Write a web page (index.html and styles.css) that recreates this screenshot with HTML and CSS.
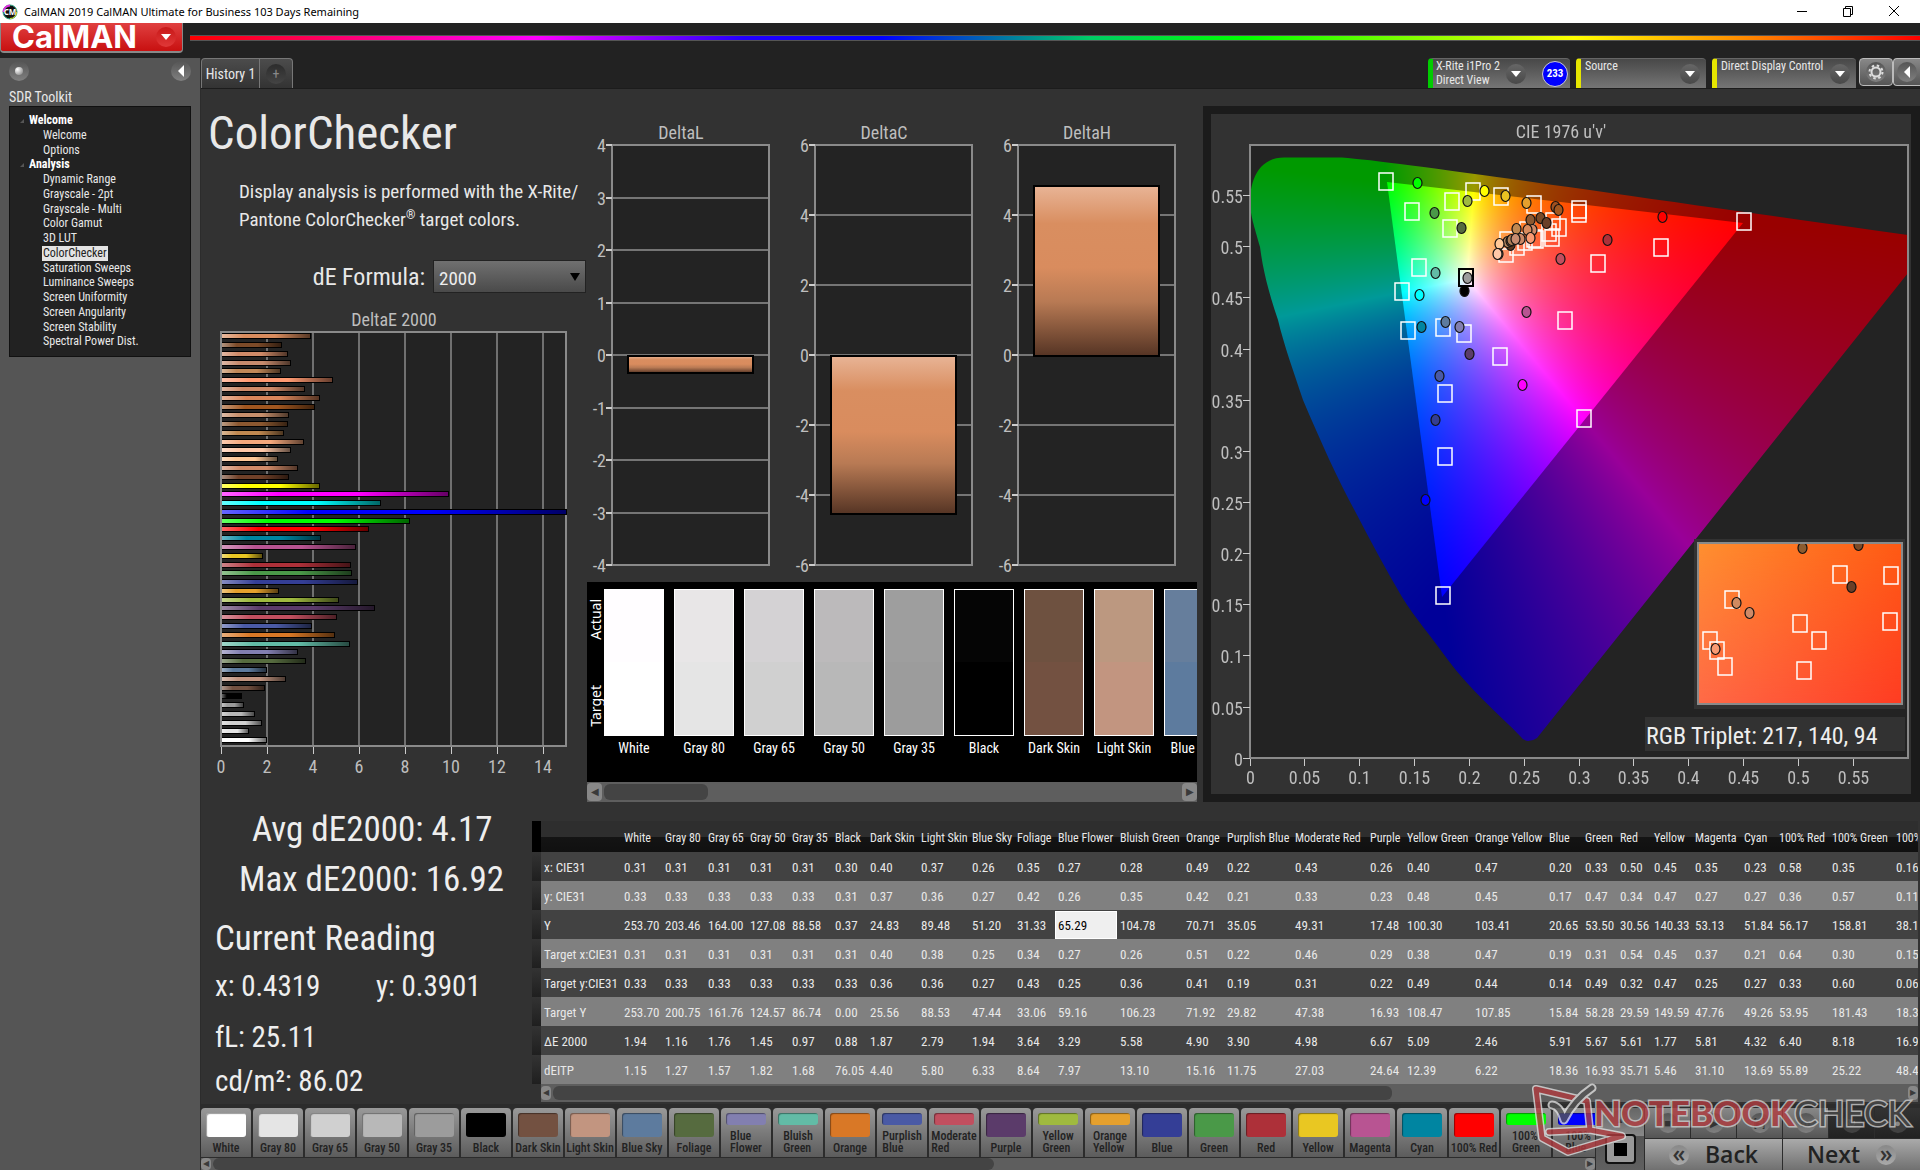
FILE: index.html
```
<!DOCTYPE html>
<html lang="en">
<head>
<meta charset="utf-8">
<title>CalMAN 2019 CalMAN Ultimate for Business</title>
<link rel="stylesheet" href="styles.css">
</head>
<body>
<div class="titlebar">
  <svg class="app-icon" viewBox="0 0 16 16" width="16" height="16" aria-hidden="true">
    <circle cx="8" cy="8" r="7" fill="#111" stroke="#3a8" stroke-width="1"/>
    <path d="M1.5 8A6.5 6.5 0 0 1 8 1.500" fill="none" stroke="#d3d" stroke-width="2"/>
    <path d="M8 14.500A6.500 6.500 0 0 0 14.500 8" fill="none" stroke="#dd2" stroke-width="1"/>
    <text x="8" y="11" text-anchor="middle" font-size="8" font-weight="700" fill="#fff">CM</text>
  </svg>
  <span class="app-title">CalMAN 2019 CalMAN Ultimate for Business 103 Days Remaining</span>
  <div class="window-buttons">
    <button type="button" aria-label="Minimize"><svg width="12" height="12" viewBox="0 0 12 12"><path d="M1 6.500H11" stroke="#000"/></svg></button>
    <button type="button" aria-label="Restore"><svg width="12" height="12" viewBox="0 0 12 12"><path d="M1.500 3.500H8.500V11.500H1.500ZM3.500 3V1.500H10.500V9.500H9" fill="none" stroke="#000"/></svg></button>
    <button type="button" aria-label="Close"><svg width="12" height="12" viewBox="0 0 12 12"><path d="M1 1L11 11M11 1L1 11" stroke="#000"/></svg></button>
  </div>
</div>

<header class="brandbar">
  <button type="button" class="brand">CalMAN <span class="round red"><svg width="10" height="6" viewBox="0 0 10 6"><path d="M0 0H10L5 6Z" fill="#fff"/></svg></span></button>
  <div class="rainbow"></div>
</header>

<div class="workspace">
  <aside class="sidebar">
    <div class="sidebar-tools">
      <span class="round"><i class="dot"></i></span>
      <button type="button" class="round" aria-label="Collapse"><svg width="6" height="12" viewBox="0 0 6 12"><path d="M6 0V12L0 6Z" fill="#fff"/></svg></button>
    </div>
    <h2>SDR Toolkit</h2>
    <nav class="tree">
      <h3>Welcome</h3>
      <a href="#">Welcome</a>
      <a href="#">Options</a>
      <h3>Analysis</h3>
      <a href="#">Dynamic Range</a>
      <a href="#">Grayscale - 2pt</a>
      <a href="#">Grayscale - Multi</a>
      <a href="#">Color Gamut</a>
      <a href="#">3D LUT</a>
      <a href="#" class="current">ColorChecker</a>
      <a href="#">Saturation Sweeps</a>
      <a href="#">Luminance Sweeps</a>
      <a href="#">Screen Uniformity</a>
      <a href="#">Screen Angularity</a>
      <a href="#">Screen Stability</a>
      <a href="#">Spectral Power Dist.</a>
    </nav>
  </aside>

  <div class="stage">
    <div class="toolbar">
      <div class="tabs">
        <button type="button">History 1</button>
        <button type="button" class="add" aria-label="Add tab"><span class="round dark">+</span></button>
      </div>
      <div class="devices">
        <div class="device green meter">
          <span>X-Rite i1Pro 2<br>Direct View</span>
          <button type="button" class="round" aria-label="Meter menu"><svg width="10" height="6" viewBox="0 0 10 6"><path d="M0 0H10L5 6Z" fill="#fff"/></svg></button>
          <b class="count">233</b>
        </div>
        <div class="device source">
          <span>Source</span>
          <button type="button" class="round" aria-label="Source menu"><svg width="10" height="6" viewBox="0 0 10 6"><path d="M0 0H10L5 6Z" fill="#fff"/></svg></button>
        </div>
        <div class="device display">
          <span>Direct Display Control</span>
          <button type="button" class="round" aria-label="Display menu"><svg width="10" height="6" viewBox="0 0 10 6"><path d="M0 0H10L5 6Z" fill="#fff"/></svg></button>
        </div>
        <button type="button" class="square" aria-label="Settings"><span class="round"><svg width="16" height="16" viewBox="0 0 16 16"><circle cx="8" cy="8" r="4.500" fill="none" stroke="#ddd" stroke-width="2"/><circle cx="8" cy="8" r="6.500" fill="none" stroke="#ddd" stroke-width="2" stroke-dasharray="2.500 2.600"/></svg></span></button>
        <button type="button" class="square narrow" aria-label="Collapse panel"><span class="round"><svg width="6" height="12" viewBox="0 0 6 12"><path d="M6 0V12L0 6Z" fill="#fff"/></svg></span></button>
      </div>
    </div>

    <main class="content">
      <section class="summary">
        <h1>ColorChecker</h1>
        <p>Display analysis is performed with the X-Rite/<br>Pantone ColorChecker<sup>®</sup> target colors.</p>
        <div class="formula">
          <label for="formula">dE Formula:</label>
          <div class="select"><select id="formula"><option>2000</option></select></div>
        </div>
        <svg id="delta-e" class="chart" viewBox="201 305 386 480" role="img" aria-label="DeltaE 2000"></svg>
      </section>

      <section class="deltas">
        <svg id="delta-lch" class="chart" viewBox="587 89 616 493" role="img" aria-label="DeltaL, DeltaC, DeltaH"></svg>
        <div class="swatch-panel">
          <div class="swatches">
            <div class="sides"><span>Actual</span><span>Target</span></div>
            <div class="swatch-row" id="swatches"></div>
          </div>
          <div class="scrollbar"><button type="button" aria-label="Scroll left">◀</button><div class="track"><i style="width:18%"></i></div><button type="button" aria-label="Scroll right">▶</button></div>
        </div>
      </section>

      <section class="cie">
        <div class="cie-inner">
          <canvas id="gamut" width="700" height="680"></canvas>
          <svg id="cie" class="chart" viewBox="1211 114 700 680" role="img" aria-label="CIE 1976 u'v'"></svg>
        </div>
      </section>
    </main>

    <section class="results">
      <div class="readings">
        <p class="big indent-a">Avg dE2000: 4.17</p>
        <p class="big indent-b">Max dE2000: 16.92</p>
        <p class="mid">Current Reading</p>
        <p class="small pair"><span>x: 0.4319</span><span>y: 0.3901</span></p>
        <p class="small spaced">fL: 25.11</p>
        <p class="small">cd/m²: 86.02</p>
      </div>
      <div class="grid-panel">
        <div class="grid-clip"><table id="data"></table></div>
        <div class="scrollbar wide"><button type="button" aria-label="Scroll left">◀</button><div class="track"><i style="width:62%"></i></div><button type="button" aria-label="Scroll right">▶</button></div>
      </div>
    </section>

    <footer class="footer">
      <div class="palette-panel">
        <div class="palette" id="palette"></div>
        <div class="scrollbar thin"><button type="button" aria-label="Scroll left">◀</button><div class="track"><i style="width:57%"></i></div><button type="button" aria-label="Scroll right">▶</button></div>
      </div>
      <div class="pattern">
        <span class="round">▲</span>
        <button type="button" aria-label="Stop pattern"><i></i></button>
      </div>
      <div class="controls">
        <div class="transport">
          <button type="button" aria-label="Stop"><span class="round">■</span></button>
          <button type="button" aria-label="Play"><span class="round">▶</span></button>
          <button type="button" aria-label="Read series"><span class="round">[▸]</span></button>
          <button type="button" aria-label="Continuous"><span class="round">∞</span></button>
          <button type="button" class="off" aria-label="Refresh" disabled><span class="round dark">↻</span></button>
          <button type="button" class="off" aria-label="Record" disabled><span class="round dark">●</span></button>
        </div>
        <div class="pager">
          <button type="button"><span class="round">«</span>Back</button>
          <button type="button">Next<span class="round">»</span></button>
        </div>
      </div>
      <svg class="watermark" width="400" height="100" viewBox="0 0 400 100" role="img" aria-label="Notebookcheck">
        <g fill="none" stroke-linejoin="round" stroke-linecap="round">
          <g id="cube" stroke="#ddd" stroke-width="8"><path d="M16 19L67 31L70 60L29 62M16 19L22 68L48 82L102 66L70 60"/></g>
          <path d="M16 19L67 31L70 60L29 62M16 19L22 68L48 82L102 66L70 60" stroke="#b03c40" stroke-width="5"/>
          <path d="M32 35Q40 36 44 50Q54 30 72 18" stroke="#ddd" stroke-width="9"/>
          <path d="M32 35Q40 36 44 50Q54 30 72 18" stroke="#555" stroke-width="5"/>
        </g>
        <text x="74" y="56" class="mark"><tspan fill="#b03c40" font-weight="900">NOTEBOOK</tspan><tspan fill="#484848" font-weight="400">CHECK</tspan></text>
      </svg>
    </footer>
  </div>
</div>
<script src="script.js"></script>
</body>
</html>
```
FILE: styles.css
```
* { box-sizing: border-box; }
body {
  margin: 0;
  min-height: 100vh;
  display: flex;
  flex-direction: column;
  background: #222;
  color: #e8e8e8;
  font-family: "Roboto Condensed", Roboto, sans-serif;
  font-size: 14px;
  overflow-x: hidden;
}
h1, h2, h3, p { margin: 0; font-weight: 400; }
button { font: inherit; color: inherit; border: 0; padding: 0; background: none; }
a { color: inherit; text-decoration: none; }

.titlebar { display: flex; align-items: center; height: 23px; padding: 0 2px; background: #fff; color: #000; font: 11px "Noto Sans", sans-serif; }
.titlebar svg { display: block; }
.app-title { margin-left: 6px; flex: 1; }
.window-buttons { display: flex; padding: 0 18px 2px 0; gap: 34px; }

.brandbar { display: flex; height: 35px; align-items: flex-start; gap: 7px; }
.brand { display: flex; align-items: center; justify-content: space-between; width: 183px; height: 30px; padding: 0 6px 0 11px; background: linear-gradient(#e04040, #c81010); border: solid #888; border-width: 0 1px 2px; border-radius: 0 0 4px 4px; color: #fff; font: 700 31px/28px Inter, sans-serif; }
.rainbow { flex: 1; height: 6px; margin-top: 12px; border: solid #555; border-width: 1px 0; background: linear-gradient(90deg, #f00, #f0f 20%, #20f 32%, #00f 40%, #0c6 52%, #0f0 61%, #ff0 80%, #f80 90%, #f00); }

.round { display: inline-flex; align-items: center; justify-content: center; flex: none; width: 20px; height: 20px; border-radius: 50%; background: linear-gradient(#555, #808080); color: #333; }
.round.red { background: linear-gradient(#c81818, #e03838); }
.round.dark { background: linear-gradient(#2c2c2c, #444); color: #888; }
.dot { width: 8px; height: 8px; border-radius: 50%; background: radial-gradient(at 30% 30%, #fff, #777); }

.workspace { flex: 1; display: grid; grid-template-columns: 201px minmax(0, 1fr); }
.sidebar { padding: 3px 9px 0; background: #555; border-right: 1px solid #2c2c2c; }
.sidebar-tools { display: flex; justify-content: space-between; }
.sidebar h2 { height: 34px; font-size: 14px; line-height: 32px; }
.tree { display: grid; grid-auto-rows: 1fr; justify-items: start; height: 251px; margin-top: -9px; padding: 6px 0 7px 32px; background: #222; border: 1px solid #111; font-size: 12px; line-height: 14px; }
.tree h3 { margin-left: -13px; font-size: 12px; font-weight: 700; color: #fff; position: relative; }
.tree h3::before { content: ""; position: absolute; left: -9px; top: 6px; border-top: 4px solid transparent; border-right: 4px solid #555; }
.tree a { padding: 0 1px; }
.tree .current { background: #e4e4e4; color: #222; }

.stage { display: flex; flex-direction: column; min-width: 0; background: #323232; }
.toolbar { display: flex; justify-content: space-between; height: 31px; background: #222; border-bottom: 1px solid #1c1c1c; }
.tabs { display: flex; border: 1px solid #777; border-bottom: 0; border-radius: 4px 4px 0 0; background: linear-gradient(#4c4c4c, #333); }
.tabs button { width: 57px; }
.tabs .add { width: 33px; border-left: 1px solid #777; }
.devices { display: flex; align-items: flex-start; line-height: 14px; font-size: 12px; }
.device { display: flex; align-items: center; gap: 4px; height: 30px; padding-right: 6px; background: linear-gradient(#484848, #757575); border-left: 5px solid #e6e600; border-top: 1px solid #666; border-radius: 4px 4px 0 0; }
.device > span { flex: 1; padding-left: 4px; align-self: flex-start; white-space: nowrap; }
.device .round { background: linear-gradient(#666, #484848); }
.device.green { border-left-color: #0c0; }
.meter { width: 142px; padding-right: 2px; margin-right: 6px; }
.meter > span { padding-left: 3px; }
.source { width: 130px; margin-right: 6px; }
.display { width: 144px; margin-right: 3px; }
.count { display: flex; align-items: center; justify-content: center; width: 26px; height: 26px; margin-left: 12px; border-radius: 50%; border: 1px solid #ccc; background: #00f; color: #fff; font-size: 11px; }
.square { width: 34px; height: 28px; border: 1px solid #bbb; border-radius: 4px; background: linear-gradient(#888, #555); }
.square.narrow { width: 27px; border-right: 0; border-radius: 4px 0 0 4px; }

.content { display: grid; grid-template-columns: 386fr 616fr 717fr; align-items: start; }
.content > section { min-width: 0; }
.chart { display: block; width: 100%; height: auto; font-size: 18px; fill: #bebebe; }
.summary h1 { padding: 14px 0 0 7px; font-size: 47px; line-height: 60px; }
.summary p { padding: 15px 0 0 38px; font-size: 19px; line-height: 28px; white-space: nowrap; }
.summary sup { font-size: 12px; line-height: 0; }
.formula { display: flex; justify-content: flex-end; align-items: center; gap: 8px; margin: 26px 1px 12px 0; font-size: 24px; }
.select { position: relative; width: 153px; height: 33px; }
.select select { appearance: none; width: 100%; height: 100%; padding: 4px 5px 0; border: 1px solid #222; border-radius: 0; background: linear-gradient(#707070, #4a4a4a); color: #eee; font: 19px "Roboto Condensed", sans-serif; }
.select::after { content: ""; position: absolute; right: 6px; top: 13px; border: solid transparent; border-width: 8px 5px 0; border-top-color: #000; }

.swatch-panel { margin-right: 6px; background: #000; }
.swatches { display: flex; height: 200px; padding-top: 7px; color: #fff; }
.sides { display: flex; flex-direction: column; justify-content: space-between; align-items: center; width: 17px; height: 148px; padding: 10px 0; flex: none; font: 14px "Noto Sans", sans-serif; }
.sides span { writing-mode: vertical-rl; transform: rotate(180deg); }
.swatch-row { display: flex; gap: 10px; overflow: hidden; }
.swatch { flex: none; width: 60px; margin: 0; text-align: center; line-height: 25px; white-space: nowrap; }
.swatch i { display: block; height: 147px; border: 1px solid #fff; }

.scrollbar { display: flex; align-items: center; gap: 2px; height: 20px; background: #5e5e5e; }
.scrollbar button { width: 15px; height: 18px; flex: none; overflow: hidden; border-radius: 4px; background: #888; color: #3a3a3a; font-size: 10px; line-height: 18px; }
.track { flex: 1; align-self: stretch; padding: 2px 0; }
.track i { display: block; height: 100%; border-radius: 6px; background: #444; }
.scrollbar.wide { height: 18px; }
.scrollbar.wide button, .scrollbar.thin button { width: 10px; height: 14px; line-height: 14px; font-size: 8px; }
.scrollbar.thin { height: 12px; }
.scrollbar.thin .track { padding: 0; }
.scrollbar.thin button { height: 12px; line-height: 12px; }

.cie { margin-top: 17px; padding: 8px 9px 8px 8px; background: #1b1b1b; }
.cie-inner { display: grid; background: #323232; }
.cie-inner > * { grid-area: 1 / 1; width: 100%; height: auto; min-width: 0; }
.triplet { font-size: 24px; fill: #eee; }

.results { display: grid; grid-template-columns: 331fr 1388fr; flex: 1; }
.readings { padding: 3px 0 0 14px; color: #eee; white-space: nowrap; }
.big { font-size: 35px; line-height: 50px; }
.indent-a { padding-left: 37px; }
.indent-b { padding-left: 24px; }
.mid { margin-top: 9px; font-size: 35px; line-height: 50px; }
.small { font-size: 29px; line-height: 44px; }
.spaced { margin-top: 7px; }
.pair { display: grid; grid-template-columns: 161px auto; }
.grid-panel { min-width: 0; padding: 19px 2px 0 0; }
.grid-clip { overflow: hidden; }
.grid-panel .scrollbar { margin-left: 9px; }
#data { table-layout: fixed; border-collapse: collapse; text-align: left; white-space: nowrap; }
#data th, #data td { height: 29px; padding: 2px 0 0 3px; font-weight: 400; font-size: 13px; overflow: hidden; }
#data thead th { height: 31px; padding-top: 3px; font-size: 12px; background: linear-gradient(#2e2e2e 50%, #141414 51%, #101010); }
#data tbody tr { background: #424242; }
#data tbody tr:nth-child(even) { background: #808080; }
#data tbody .edge { background: linear-gradient(#333, #1f1f1f); }
#data thead .edge { background: #000; }
#data td.editing { padding: 0; }
#data td input { display: block; width: 100%; height: 28px; padding: 2px 0 0 2px; border: 1px solid #fff; background: #efefef; color: #000; font: 13px "Roboto Condensed", sans-serif; }

.footer { position: relative; display: flex; gap: 1px; padding-top: 4px; background: #2c2c2c; color: #222; }
.palette-panel { flex: 1; min-width: 0; }
.palette { display: flex; gap: 2px; height: 50px; overflow: hidden; }
.patch { display: flex; flex-direction: column; align-items: center; justify-content: space-between; flex: none; width: 50px; height: 49px; padding: 5px 0 3px; border-radius: 4px 4px 0 0; background: linear-gradient(#999, #5c5c5c); font-size: 12px; font-weight: 500; line-height: 12px; white-space: nowrap; color: #222; }
.patch i { width: 40px; flex: 1; margin-bottom: 5px; border-radius: 3px; box-shadow: inset 1px 1px 1px rgba(0,0,0,.4); }
.patch span { text-align: left; }
.pattern { display: flex; flex-direction: column; align-items: center; justify-content: space-between; width: 48px; padding: 2px 0 6px; background: linear-gradient(#666, #888 45%, #555 46%, #606060); font-size: 8px; }
.pattern button { display: flex; align-items: center; justify-content: center; width: 31px; height: 30px; border: 2px solid #111; border-radius: 4px; background: #999; }
.pattern button i { width: 13px; height: 13px; background: #000; }
.controls { width: 275px; display: flex; flex-direction: column; gap: 1px; }
.transport { display: grid; grid-template-columns: repeat(6, 1fr); gap: 1px; height: 30px; }
.transport button { background: linear-gradient(#888, #555); font-size: 11px; }
.transport .off { background: linear-gradient(#333, #222); }
.pager { display: grid; grid-template-columns: 1fr 1fr; gap: 1px; flex: 1; }
.pager button { display: flex; align-items: center; justify-content: center; gap: 16px; background: linear-gradient(#aaa, #707070); font: 600 23px/29px "Open Sans", sans-serif; color: #222; }
.pager .round { line-height: 16px; padding-bottom: 4px; background: linear-gradient(#888, #aaa); }
.watermark { position: absolute; right: 0; bottom: 0; opacity: .8; pointer-events: none; }
.mark { font: 35px Lato, sans-serif; stroke: #ccc; stroke-width: 3px; paint-order: stroke; }
```
FILE: script.js
```
const $ = id => document.getElementById(id);
const line = (x1, y1, x2, y2, c = '#888') =>
  `<path d="M${x1} ${y1}L${x2} ${y2}" stroke="${c}" fill="none" shape-rendering="crispEdges"/>`;
const text = (x, y, s, anchor = 'middle', cls = '') =>
  `<text x="${x}" y="${y}" text-anchor="${anchor}" class="${cls}">${s}</text>`;
const frame = (x, y, w, h, fill = '#232323') =>
  `<rect x="${x}" y="${y}" width="${w}" height="${h}" fill="${fill}" stroke="#8a8a8a" stroke-width="2" shape-rendering="crispEdges"/>`;

const patches = [
  ['White', '#ffffff'], ['Gray 80', '#e5e5e5'], ['Gray 65', '#d0d0d0'], ['Gray 50', '#b8b8b8'],
  ['Gray 35', '#9c9c9c'], ['Black', '#000000'], ['Dark Skin', '#735141'], ['Light Skin', '#c29580'],
  ['Blue Sky', '#5d7b9e'], ['Foliage', '#566b3f'], ['Blue Flower', '#827fb0'], ['Bluish Green', '#62bba6'],
  ['Orange', '#d97826'], ['Purplish Blue', '#4a5aa5'], ['Moderate Red', '#c14f5f'], ['Purple', '#5b3b6a'],
  ['Yellow Green', '#9fba3f'], ['Orange Yellow', '#e5a02d'], ['Blue', '#343e96'], ['Green', '#4a9948'],
  ['Red', '#ad3039'], ['Yellow', '#e9c722'], ['Magenta', '#b85492'], ['Cyan', '#0085a1'],
  ['100% Red', '#ff0000'], ['100% Green', '#00ff00'], ['100% Blue', '#0000ff']
];

/* DeltaE 2000 bars, first patch at the bottom */
const skin = ['#d98c5e', '#7c4a28', '#cf8a68', '#c68a6c', '#c08858', '#ff9a72', '#cf8a68', '#d9855a', '#a0561f',
  '#c8906c', '#8c5830', '#c08850', '#f5a87c', '#ffc8a8', '#ffc898', '#d08a68', '#704028'];
const barColors = [...skin, '#ffff00', '#ff00ff', '#00ffff', ...patches.map(p => p[1]).reverse()];
const barValues = [3.85, 2.62, 2.85, 3, 2.57, 4.84, 3.62, 4.28, 4.05, 2.93, 2.85, 2.7, 3.55, 3, 2.45, 3.3, 2.9,
  4.28, 9.88, 6.92, 15, 8.18, 6.4, 4.32, 5.81, 1.77, 5.61, 5.67, 5.91, 2.46, 5.09, 6.67, 4.98, 3.9, 4.9, 5.58,
  3.29, 3.64, 1.94, 2.79, 1.87, 0.88, 0.97, 1.45, 1.76, 1.16, 1.94];
let s = `<defs><linearGradient id="sheen"><stop offset="0" stop-color="#fff" stop-opacity=".4"/>
  <stop offset=".25" stop-color="#fff" stop-opacity="0"/><stop offset=".6" stop-color="#000" stop-opacity="0"/>
  <stop offset="1" stop-color="#000" stop-opacity=".6"/></linearGradient></defs>`;
s += text(394, 326, 'DeltaE 2000') + frame(221, 332, 345, 414);
for (let v = 0; v < 15; v += 2) {
  const x = Math.round(220.500 + v * 23);
  if (v) s += `<path d="M${x} 333V745" stroke="#707070" stroke-width="2"/>`;
  s += line(x + .5, 747, x + .5, 754, '#ccc') + text(x, 773, v);
}
barValues.forEach((v, i) => {
  const y = Math.round(336.3 + i * 8.78), w = Math.round(v * 23);
  s += `<rect x="222" y="${y - 3}" width="${w}" height="6" fill="#000"/>` +
    `<rect x="222" y="${y - 2}" width="${w - 1}" height="4" fill="${barColors[i]}"/>` +
    `<rect x="222" y="${y - 2}" width="${w - 1}" height="4" fill="url(#sheen)"/>`;
});
$('delta-e').innerHTML = s;

/* DeltaL, DeltaC and DeltaH columns */
s = `<defs><linearGradient id="bar" x2="0" y2="1"><stop offset="0" stop-color="#e8b496"/><stop offset=".22" stop-color="#d98e60"/>
  <stop offset=".48" stop-color="#d98c5e"/><stop offset=".68" stop-color="#b87a54"/><stop offset="1" stop-color="#553424"/></linearGradient></defs>`;
[['DeltaL', 612, 4, 1, 356, 17], ['DeltaC', 815, 6, 2, 356, 158], ['DeltaH', 1018, 6, 2, 186, 170]]
  .forEach(([name, x, max, step, top, h]) => {
    s += text(x + 69, 139, name) + frame(x, 145, 157, 420);
    for (let v = -max; v <= max; v += step) {
      const y = Math.round(355 - v * 210 / max);
      if (Math.abs(v) < max) s += `<path d="M${x + 1} ${y}H${x + 156}" stroke="#757575" stroke-width="2"/>`;
      s += `<path d="M${x - 6} ${y}H${x}" stroke="#ccc" stroke-width="2"/>` + text(x - 6, y + 7, v, 'end');
    }
    s += `<rect x="${x + 16}" y="${top}" width="125" height="${h}" fill="url(#bar)" stroke="#000" stroke-width="2"/>`;
  });
$('delta-lch').innerHTML = s;

/* Actual / target swatches */
const actual = ['#fffdff', '#e8e6e7', '#d4d2d4', '#bcbabb', '#9e9e9e', '#050505', '#6e5140', '#bc9880', '#667e9c'];
$('swatches').innerHTML = actual.map((c, i) =>
  `<figure class="swatch"><i style="background:linear-gradient(${c} 50%,${patches[i][1]} 50%)"></i>${patches[i][0]}</figure>`).join('');

/* Patch palette */
$('palette').innerHTML = patches.map(([n, c], i) => {
  const two = n.includes(' ') && i > 9 && n !== '100% Red';
  return `<button type="button" class="patch"><i style="background:${c}"></i><span>${two ? n.replace(' ', '<br>') : n}</span></button>`;
}).join('');

/* Results table */
const starts = [541, 621, 662, 705, 747, 789, 832, 867, 918, 969, 1014, 1055, 1117, 1183, 1224, 1292, 1367, 1404,
  1472, 1546, 1582, 1617, 1651, 1692, 1741, 1776, 1829, 1893, 1933];
const rows = {
  'x: CIE31': '0.31 0.31 0.31 0.31 0.31 0.30 0.40 0.37 0.26 0.35 0.27 0.28 0.49 0.22 0.43 0.26 0.40 0.47 0.20 0.33 0.50 0.45 0.35 0.23 0.58 0.35 0.16',
  'y: CIE31': '0.33 0.33 0.33 0.33 0.33 0.31 0.37 0.36 0.27 0.42 0.26 0.35 0.42 0.21 0.33 0.23 0.48 0.45 0.17 0.47 0.34 0.47 0.27 0.27 0.36 0.57 0.11',
  'Y': '253.70 203.46 164.00 127.08 88.58 0.37 24.83 89.48 51.20 31.33 65.29 104.78 70.71 35.05 49.31 17.48 100.30 103.41 20.65 53.50 30.56 140.33 53.13 51.84 56.17 158.81 38.1',
  'Target x:CIE31': '0.31 0.31 0.31 0.31 0.31 0.31 0.40 0.38 0.25 0.34 0.27 0.26 0.51 0.22 0.46 0.29 0.38 0.47 0.19 0.31 0.54 0.45 0.37 0.21 0.64 0.30 0.15',
  'Target y:CIE31': '0.33 0.33 0.33 0.33 0.33 0.33 0.36 0.36 0.27 0.43 0.25 0.36 0.41 0.19 0.31 0.22 0.49 0.44 0.14 0.49 0.32 0.47 0.25 0.27 0.33 0.60 0.06',
  'Target Y': '253.70 200.75 161.76 124.57 86.74 0.00 25.56 88.53 47.44 33.06 59.16 106.23 71.92 29.82 47.38 16.93 108.47 107.85 15.84 58.28 29.59 149.59 47.76 49.26 53.95 181.43 18.3',
  'ΔE 2000': '1.94 1.16 1.76 1.45 0.97 0.88 1.87 2.79 1.94 3.64 3.29 5.58 4.90 3.90 4.98 6.67 5.09 2.46 5.91 5.67 5.61 1.77 5.81 4.32 6.40 8.18 16.9',
  'dEITP': '1.15 1.27 1.57 1.82 1.68 76.05 4.40 5.80 6.33 8.64 7.97 13.10 15.16 11.75 27.03 24.64 12.39 6.22 18.36 16.93 35.71 5.46 31.10 13.69 55.89 25.22 48.4'
};
const table = $('data');
table.style.width = `${9 + starts[starts.length - 1] - starts[0]}px`;
table.innerHTML = '<colgroup><col style="width:9px">' +
  starts.slice(1).map((x, i) => `<col style="width:${x - starts[i]}px">`).join('') + '</colgroup><thead><tr><th class="edge"></th><th></th>' +
  patches.map(p => `<th scope="col">${p[0]}</th>`).join('') + '</tr></thead><tbody>' +
  Object.entries(rows).map(([k, v]) => `<tr><td class="edge"></td><th scope="row">${k}</th>` +
    v.split(' ').map(n => n === '65.29' ? `<td class="editing"><input aria-label="Y, Blue Flower" value="${n}"></td>` : `<td>${n}</td>`).join('') + '</tr>').join('') + '</tbody>';

/* CIE 1976 u'v' diagram */
const U = u => 1249.5 + u * 1097, V = v => 757.7 - v * 1023;
const locus = new Path2D('M1250 200C1251 175 1262 157 1285 157.5L1342 157.5C1400 162 1600 192 1908 235L1908 273L1537 738Q1533 741 1528 741Q1523 740 1521 737C1500 715 1470 690 1448 660C1430 635 1415 618 1402 597C1385 568 1370 540 1356 513C1337 478 1320 440 1303 400C1293 370 1284 345 1278 320C1268 290 1263 270 1260 247C1254 225 1250 215 1250 200Z');
const triangle = new Path2D('M1387 182L1743 223L1442 597Z');
function colorAt(u, v) {
  const d = 6 * u - 16 * v + 12, x = 9 * u / d, y = 4 * v / d, z = 1 - x - y;
  const rgb = [3.2406 * x - 1.5372 * y - 0.4986 * z, -0.9689 * x + 1.8758 * y + 0.0415 * z, 0.0557 * x - 0.204 * y + 1.057 * z]
    .map(c => Math.max(c, 0));
  const m = Math.max(...rgb);
  return rgb.map(c => 255 * c / m);
}
function layer(k) {
  const c = document.createElement('canvas');
  c.width = 700; c.height = 680;
  const g = c.getContext('2d'), img = g.createImageData(700, 680);
  for (let j = 0; j < 680; j++) for (let i = 0; i < 700; i++) {
    const rgb = colorAt((i + 1211 - 1249.5) / 1097, (757.7 - j - 114) / 1023), o = 4 * (j * 700 + i);
    img.data[o] = rgb[0] * k; img.data[o + 1] = rgb[1] * k; img.data[o + 2] = rgb[2] * k; img.data[o + 3] = 255;
  }
  g.putImageData(img, 0, 0);
  return c;
}
const g = $('gamut').getContext('2d');
g.translate(-1211, -114);
g.fillStyle = '#232323';
g.fillRect(1250, 145, 658, 613);
[[locus, .6], [triangle, 1]].forEach(([path, k]) => {
  g.save(); g.clip(path); g.drawImage(layer(k), 1211, 114); g.restore();
});

s = text(1561, 138, "CIE 1976 u'v'") + frame(1250, 145, 658, 613, 'none');
for (let i = 0; i < 12; i++) {
  const v = +(i * .05).toFixed(2), x = Math.round(U(v)) + .5, y = Math.round(V(v)) + .5;
  s += line(x, 759, x, 766, '#ccc') + text(x, 784, v) + line(1243, y, 1250, y, '#ccc') + text(1243, y + 7, v, 'end');
}
const box = (x, y, c = '#fff') => `<rect x="${Math.round(x) - 6}" y="${Math.round(y) - 8}" width="14" height="17" fill="none" stroke="${c}" stroke-width="${c === '#fff' ? 1.5 : 2}"/>`;
const dot = (x, y, c) => `<ellipse cx="${x + .5}" cy="${y}" rx="4.5" ry="5.5" fill="${c}" stroke="#111" stroke-width="1.2"/>`;
const boxes = [[1385, 181], [1411, 211], [1451, 201], [1449, 228], [1472, 191], [1500, 196], [1533, 204], [1578, 209], [1578, 213],
  [1743, 221], [1660, 247], [1597, 263], [1564, 320], [1418, 267], [1401, 291], [1407, 330], [1442, 327], [1463, 333], [1499, 356],
  [1444, 393], [1583, 418], [1444, 456], [1442, 595], [1506, 240], [1505, 253], [1516, 246], [1526, 230], [1533, 238], [1551, 237],
  [1552, 221], [1558, 227], [1548, 232], [1535, 239], [1524, 241]];
const dots = [[1417, 183, '#0f0'], [1434, 213, '#4a9948'], [1467, 201, '#9fba3f'], [1461, 228, '#566b3f'], [1484, 191, '#ff0'],
  [1505, 196, '#e9c322'], [1526, 203, '#e5a02d'], [1662, 217, '#f00'], [1607, 240, '#ad3039'], [1560, 259, '#c14f5f'],
  [1435, 273, '#62bba6'], [1419, 295, '#0ff'], [1421, 327, '#0085a1'], [1445, 322, '#5d7b9e'], [1459, 327, '#827fb0'],
  [1526, 312, '#b85492'], [1469, 354, '#5b3d6a'], [1439, 376, '#4a5aa5'], [1522, 385, '#f0f'], [1435, 420, '#343e92'],
  [1425, 500, '#00f'], [1464, 291, '#000'], [1555, 207, '#a05020'], [1558, 210, '#a3571f'], [1540, 218, '#7a4a28'],
  [1546, 223, '#6a3f28'], [1530, 220, '#8c5830'], [1516, 229, '#c08850'], [1532, 230, '#cf8a68'], [1527, 230, '#d98c5e'],
  [1530, 238, '#f99a72'], [1520, 239, '#cc8866'], [1510, 245, '#5a3820'], [1507, 242, '#b88860'], [1510, 241, '#a87850'],
  [1511, 240, '#b08058'], [1515, 239, '#c88c70'], [1499, 244, '#ffc898'], [1498, 254, '#f8c0a0'], [1497, 254, '#ffc8a8']];
s += boxes.map(b => box(...b)).join('') + dots.map(d => dot(...d)).join('');
s += box(1465, 277, '#000') + dot(1467, 278, '#9c9c9c');

/* Magnified area and RGB readout */
s += `<defs><linearGradient id="zx"><stop offset="0" stop-color="#ff9030"/><stop offset="1" stop-color="#ff5a14"/></linearGradient>
  <linearGradient id="zb"><stop offset="0" stop-color="#ff6a48"/><stop offset="1" stop-color="#ff3c22"/></linearGradient>
  <linearGradient id="zm" x2="0" y2="1"><stop offset="0" stop-color="#000"/><stop offset="1" stop-color="#fff"/></linearGradient>
  <mask id="fade"><rect x="1697" y="543" width="205" height="161" fill="url(#zm)"/></mask>
  <clipPath id="zc"><rect x="1698" y="544" width="203" height="159"/></clipPath></defs>
  <rect x="1694" y="539" width="211" height="170" fill="#323232"/>
  <rect x="1697" y="543" width="205" height="161" fill="url(#zx)"/>
  <rect x="1697" y="543" width="205" height="161" fill="url(#zb)" mask="url(#fade)"/><g clip-path="url(#zc)">`;
s += [[1839, 574], [1890, 575], [1731, 599], [1799, 623], [1818, 640], [1889, 621], [1709, 640], [1716, 650], [1724, 666], [1803, 670]].map(b => box(...b)).join('');
s += [[1802, 548, '#8c5c30'], [1858, 545, '#7a4a28'], [1851, 587, '#6a3f28'], [1736, 603, '#d18a60'], [1749, 613, '#cf8a68'], [1715, 649, '#f99a72']].map(d => dot(...d)).join('');
s += '</g>' + frame(1698, 543, 204, 161, 'none');
s += '<rect x="1645" y="717" width="260" height="34" fill="#323232"/>' + text(1646, 744, 'RGB Triplet: 217, 140, 94', 'start', 'triplet');
$('cie').innerHTML = s;
```
